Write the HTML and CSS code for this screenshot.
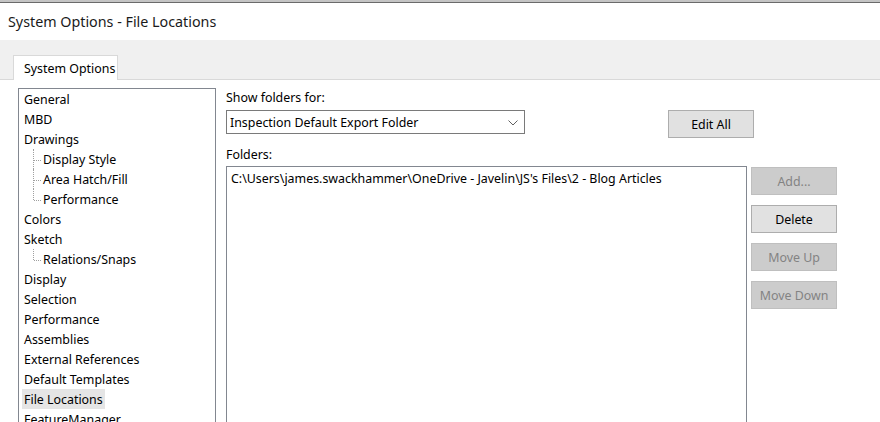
FILE: index.html
```html
<!DOCTYPE html>
<html lang="en">
  <head>
    <meta charset="UTF-8" />
    <title>System Options - File Locations</title>
    <link rel="stylesheet" href="styles.css">
  </head>
  <body>
    <div class="top-strip"></div>
    <div class="title-bar">System Options - File Locations</div>

    <div class="tab-strip">
      <div class="tab">System Options</div>
    </div>

    <div class="page">
      <div class="tree">
        <div class="node">General</div>
        <div class="node">MBD</div>
        <div class="node">Drawings</div>
        <div class="node child">Display Style</div>
        <div class="node child">Area Hatch/Fill</div>
        <div class="node child last">Performance</div>
        <div class="node">Colors</div>
        <div class="node">Sketch</div>
        <div class="node child last">Relations/Snaps</div>
        <div class="node">Display</div>
        <div class="node">Selection</div>
        <div class="node">Performance</div>
        <div class="node">Assemblies</div>
        <div class="node">External References</div>
        <div class="node">Default Templates</div>
        <div class="node"><span class="selected">File Locations</span></div>
        <div class="node">FeatureManager</div>
      </div>

      <div class="options">
        <div class="label">Show folders for:</div>
        <div class="select-row">
          <div class="dropdown">
            <span>Inspection Default Export Folder</span>
            <svg width="10" height="6" viewBox="0 0 10 6">
              <path d="M0.5 0.5 L5 5 L9.5 0.5" fill="none" stroke="#606060" stroke-width="1" />
            </svg>
          </div>
          <button class="btn edit-all">Edit All</button>
        </div>

        <div class="label folders-label">Folders:</div>
        <div class="folders-row">
          <div class="folder-list">
            <div class="folder">C:\Users\james.swackhammer\OneDrive - Javelin\JS's Files\2 - Blog Articles</div>
          </div>
          <div class="side-buttons">
            <button class="btn" disabled>Add...</button>
            <button class="btn">Delete</button>
            <button class="btn" disabled>Move Up</button>
            <button class="btn" disabled>Move Down</button>
          </div>
        </div>
      </div>
    </div>
  </body>
</html>
```

FILE: styles.css
```css
html {
  overflow: hidden;
}

body {
  margin: 0;
  height: 422px;
  overflow: hidden;
  background-color: #fff;
  font-family: "Noto Sans", "Open Sans", sans-serif;
  font-size: 12.4px;
  color: #000;
}

.top-strip {
  height: 2px;
  background-color: #c4c4c4;
  border-bottom: 1px solid #6a6a6a;
}

.title-bar {
  height: 37px;
  line-height: 38px;
  padding-left: 8px;
  font-size: 14.3px;
  color: #1a1a1a;
}

.tab-strip {
  display: flex;
  align-items: flex-end;
  height: 39px;
  padding-left: 13px;
  background-color: #f0f0f0;
  border-bottom: 1px solid #d9d9d9;
}

.tab {
  height: 24px;
  line-height: 25px;
  padding: 0 2px 0 10px;
  margin-bottom: -1px;
  background-color: #fff;
  border: 1px solid #d9d9d9;
  border-bottom: none;
}

.page {
  display: flex;
  padding: 8px 0 0 18px;
}

.tree {
  width: 193px;
  height: 360px;
  border: 1px solid #828790;
  padding: 0 0 0 3px;
  flex-shrink: 0;
}

.node {
  height: 20px;
  line-height: 21px;
  padding-left: 2px;
  white-space: nowrap;
}

.node.child {
  position: relative;
  padding-left: 21px;
}

.node.child::before {
  content: "";
  position: absolute;
  left: 11px;
  top: 0;
  height: 20px;
  border-left: 1px dotted #a0a0a0;
}

.node.child.last::before {
  height: 11px;
}

.node.child::after {
  content: "";
  position: absolute;
  left: 12px;
  top: 11px;
  width: 7px;
  border-top: 1px dotted #a0a0a0;
}

.selected {
  display: inline-block;
  height: 20px;
  background-color: #e5e5e5;
  padding: 0 2px;
  margin-left: -2px;
}

.options {
  margin-left: 10px;
  display: flex;
  flex-direction: column;
}

.label {
  height: 20px;
  line-height: 20px;
}

.select-row {
  display: flex;
  align-items: flex-start;
  margin-top: 2px;
}

.dropdown {
  width: 288px;
  height: 21px;
  border: 1px solid #7a7a7a;
  display: flex;
  align-items: center;
  justify-content: space-between;
  padding: 1px 6px 0 3px;
  box-sizing: content-box;
}

.btn {
  width: 86px;
  height: 28px;
  background-color: #e1e1e1;
  border: 1px solid #adadad;
  font-family: inherit;
  font-size: 12.4px;
  color: #000;
  padding: 1px 0 0;
}

.btn:disabled {
  background-color: #cccccc;
  border-color: #bfbfbf;
  color: #838383;
}

.edit-all {
  margin-left: 143px;
}

.folders-label {
  margin-top: 7px;
}

.folders-row {
  display: flex;
  margin-top: 1px;
}

.folder-list {
  width: 519px;
  height: 300px;
  border: 1px solid #828790;
}

.folder {
  padding: 3px 4px 1px;
  line-height: 18px;
  white-space: nowrap;
}

.side-buttons {
  display: flex;
  flex-direction: column;
  gap: 10px;
  margin-left: 4px;
  padding-top: 1px;
}
```
